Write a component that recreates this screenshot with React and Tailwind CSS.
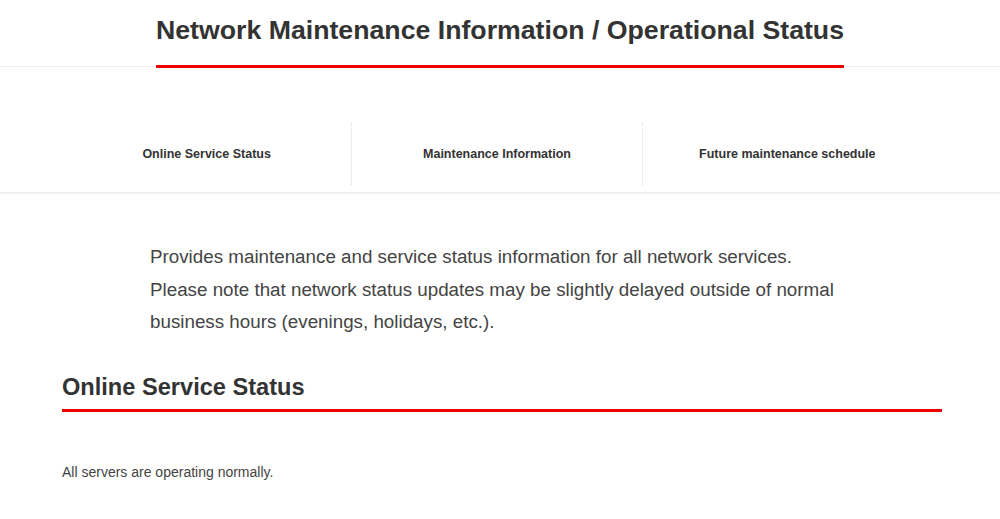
import React from "react";

const tabs = [
  "Online Service Status",
  "Maintenance Information",
  "Future maintenance schedule",
];

const App = () => {
  return (
    <div className="min-h-screen bg-white text-[#333] font-['Liberation_Sans',Arial,sans-serif]">
      <header className="border-b border-[#eee] flex justify-center">
        <h1 className="pt-[13px] text-[26.7px] leading-[34px] font-bold text-[#333] border-b-[3px] border-[#ec0000] pb-[18px] mb-[-2px]">
          Network Maintenance Information / Operational Status
        </h1>
      </header>

      <nav className="border-b-2 border-[#f0f0f0] pt-[56px] pb-[7px]">
        <ul className="flex ml-[62px] w-[870px]">
          {tabs.map((t, i) => (
            <li
              key={t}
              className={
                "flex-1 h-[62px] flex items-center justify-center text-[12.5px] font-bold text-[#333] " +
                (i > 0 ? "border-l border-dotted border-[#ddd]" : "")
              }
            >
              {t}
            </li>
          ))}
        </ul>
      </nav>

      <section className="pl-[150px] pt-[47px] text-[18.8px] leading-[32.5px] text-[#444]">
        <p>Provides maintenance and service status information for all network services.</p>
        <p>
          Please note that network status updates may be slightly delayed outside of normal
          <br />
          business hours (evenings, holidays, etc.).
        </p>
      </section>

      <section className="mx-[62px] w-[880px] mt-[33px]">
        <h2 className="text-[23.6px] font-bold text-[#333] leading-[30px] pb-[7px] border-b-[3px] border-[#ec0000]">
          Online Service Status
        </h2>
        <p className="mt-[50px] text-[14px] text-[#444]">All servers are operating normally.</p>
      </section>
    </div>
  );
};

export default App;
